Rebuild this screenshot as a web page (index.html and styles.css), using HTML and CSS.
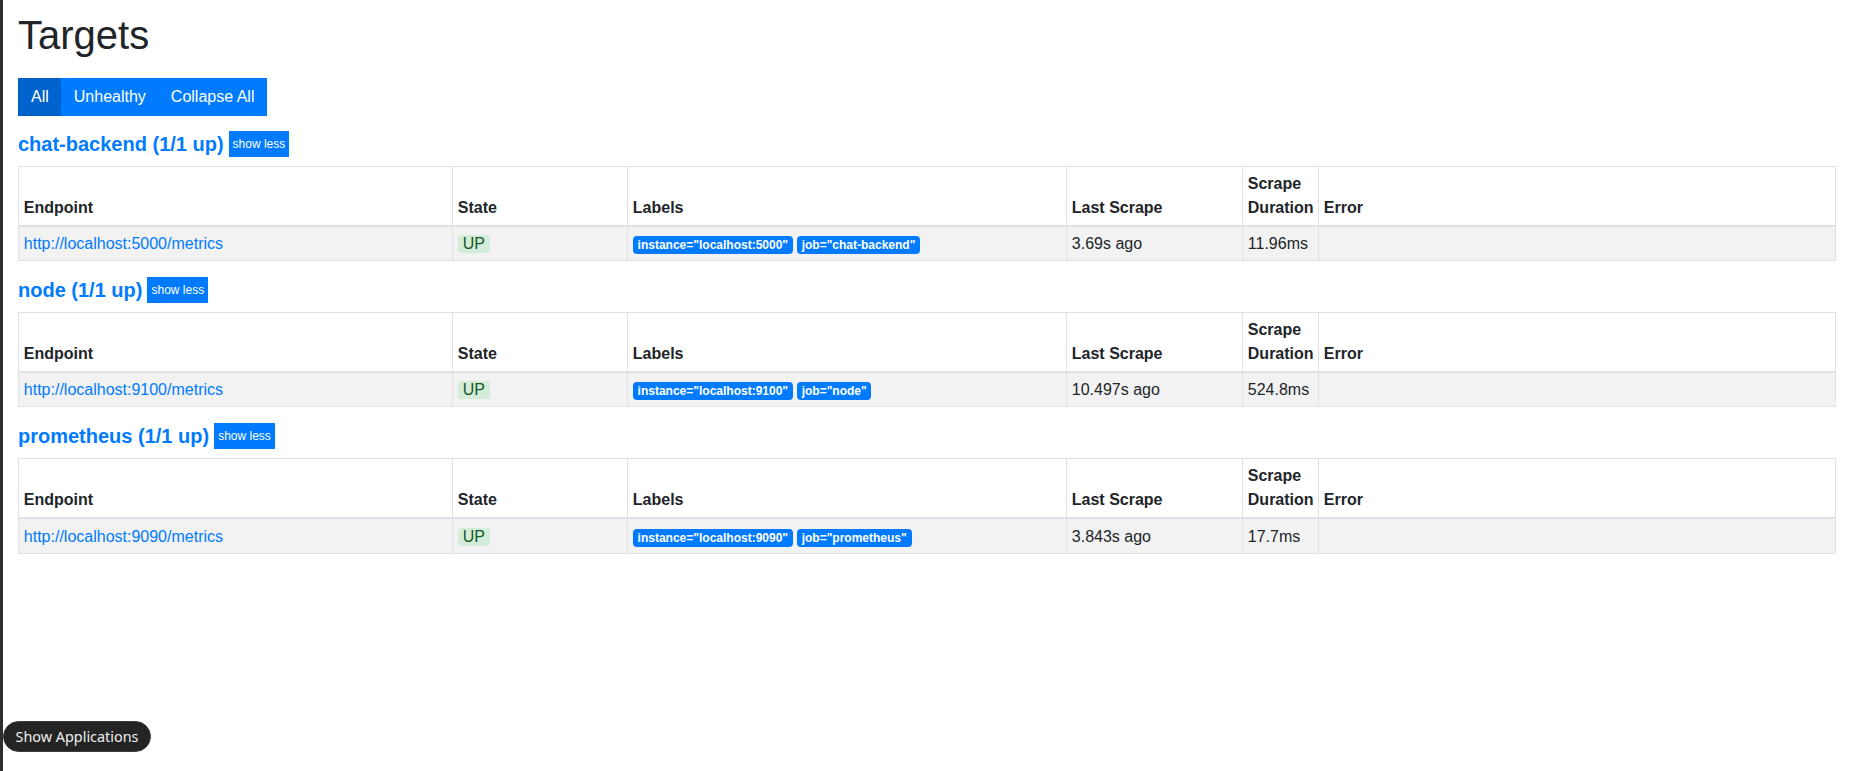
FILE: index.html
```html
<!DOCTYPE html>
<html lang="en">
<head>
<meta charset="utf-8">
<title>Targets</title>
<link rel="stylesheet" href="styles.css">
</head>
<body>
<div class="container">
  <h1 class="title">Targets</h1>
  <div class="btn-group">
    <button class="btn active">All</button>
    <button class="btn">Unhealthy</button>
    <button class="btn">Collapse All</button>
  </div>

  <section class="pool">
    <div class="pool-head">
      <a class="pool-title" href="#">chat-backend (1/1 up)</a>
      <button class="btn-xs">show less</button>
    </div>
    <table class="targets">
      <colgroup>
        <col class="c-endpoint"><col class="c-state"><col class="c-labels"><col class="c-last"><col class="c-dur"><col class="c-err">
      </colgroup>
      <thead>
        <tr><th>Endpoint</th><th>State</th><th>Labels</th><th>Last Scrape</th><th>Scrape Duration</th><th>Error</th></tr>
      </thead>
      <tbody>
        <tr>
          <td><a class="link" href="#">http://localhost:5000/metrics</a></td>
          <td><span class="state-up">UP</span></td>
          <td><span class="badge">instance="localhost:5000"</span><span class="badge">job="chat-backend"</span></td>
          <td>3.69s ago</td>
          <td>11.96ms</td>
          <td></td>
        </tr>
      </tbody>
    </table>
  </section>

  <section class="pool">
    <div class="pool-head">
      <a class="pool-title" href="#">node (1/1 up)</a>
      <button class="btn-xs">show less</button>
    </div>
    <table class="targets">
      <colgroup>
        <col class="c-endpoint"><col class="c-state"><col class="c-labels"><col class="c-last"><col class="c-dur"><col class="c-err">
      </colgroup>
      <thead>
        <tr><th>Endpoint</th><th>State</th><th>Labels</th><th>Last Scrape</th><th>Scrape Duration</th><th>Error</th></tr>
      </thead>
      <tbody>
        <tr>
          <td><a class="link" href="#">http://localhost:9100/metrics</a></td>
          <td><span class="state-up">UP</span></td>
          <td><span class="badge">instance="localhost:9100"</span><span class="badge">job="node"</span></td>
          <td>10.497s ago</td>
          <td>524.8ms</td>
          <td></td>
        </tr>
      </tbody>
    </table>
  </section>

  <section class="pool">
    <div class="pool-head">
      <a class="pool-title" href="#">prometheus (1/1 up)</a>
      <button class="btn-xs">show less</button>
    </div>
    <table class="targets">
      <colgroup>
        <col class="c-endpoint"><col class="c-state"><col class="c-labels"><col class="c-last"><col class="c-dur"><col class="c-err">
      </colgroup>
      <thead>
        <tr><th>Endpoint</th><th>State</th><th>Labels</th><th>Last Scrape</th><th>Scrape Duration</th><th>Error</th></tr>
      </thead>
      <tbody>
        <tr>
          <td><a class="link" href="#">http://localhost:9090/metrics</a></td>
          <td><span class="state-up">UP</span></td>
          <td><span class="badge">instance="localhost:9090"</span><span class="badge">job="prometheus"</span></td>
          <td>3.843s ago</td>
          <td>17.7ms</td>
          <td></td>
        </tr>
      </tbody>
    </table>
  </section>
</div>

<div class="dock-tip">Show Applications</div>
</body>
</html>
```

FILE: styles.css
```css
* { box-sizing: border-box; }

html, body { height: 100%; }

body {
  margin: 0;
  min-height: 100vh;
  border-left: 3px solid #2e2e2e;
  background: #fff;
  color: #212529;
  font-family: "Liberation Sans", Arial, sans-serif;
  font-size: 16px;
  line-height: 1.5;
}

.container {
  padding: 11px 15px 0 15px;
}

.title {
  margin: 0 0 19px 0;
  font-size: 40px;
  line-height: 48px;
  font-weight: 500;
  color: #212529;
}

.btn-group {
  display: inline-flex;
}

.btn {
  font-family: inherit;
  font-size: 16px;
  line-height: 24px;
  padding: 6px 12px;
  border: 1px solid #007bff;
  background: #007bff;
  color: #fff;
  margin: 0 0 0 -1px;
  border-radius: 0;
  cursor: pointer;
}

.btn:first-child { margin-left: 0; }

.btn.active {
  background: #0062cc;
  border-color: #005cbf;
}

.pool {
  padding-top: 15px;
}

.pool + .pool {
  padding-top: 16px;
}

.pool-head {
  display: flex;
  align-items: center;
  margin-bottom: 9px;
}

.pool-title {
  font-size: 20px;
  line-height: 24px;
  font-weight: 700;
  color: #007bff;
  text-decoration: none;
}

.btn-xs {
  margin-left: 5px;
  font-family: inherit;
  font-size: 12px;
  line-height: 18px;
  padding: 4px 4px;
  border: 0;
  background: #007bff;
  color: #fff;
  border-radius: 0;
}

.targets {
  width: 100%;
  table-layout: fixed;
  border-collapse: collapse;
  border: 1px solid #dee2e6;
}

.c-endpoint { width: 434px; }
.c-state { width: 175px; }
.c-labels { width: 439px; }
.c-last { width: 176px; }
.c-dur { width: 76px; }

.targets th,
.targets td {
  padding: 4.8px;
  border: 1px solid #dee2e6;
  text-align: left;
  vertical-align: top;
}

.targets td {
  padding-top: 5.6px;
  padding-bottom: 4px;
}

.targets th {
  vertical-align: bottom;
  border-bottom: 2px solid #dee2e6;
  font-weight: 700;
}

.targets tbody tr {
  background: #f2f2f2;
}

.link {
  color: #007bff;
  text-decoration: none;
}

.state-up {
  display: inline-block;
  padding: 1px 5px;
  line-height: 16px;
  font-size: 16px;
  background: #d4edda;
  color: #155724;
  border-radius: 3px;
}

.badge {
  display: inline-block;
  margin-right: 4px;
  padding: 3px 4.8px;
  font-size: 12px;
  font-weight: 700;
  line-height: 1;
  color: #fff;
  background: #007bff;
  border-radius: 4px;
  white-space: nowrap;
}

.dock-tip {
  position: fixed;
  left: 3px;
  top: 721px;
  height: 31px;
  width: 148px;
  border-radius: 16px;
  background: #242424;
  border: 1px solid #3c3c3c;
  color: #eeeeee;
  font-family: "Noto Sans", "Open Sans", sans-serif;
  font-size: 14.4px;
  line-height: 29px;
  text-align: center;
}
```
